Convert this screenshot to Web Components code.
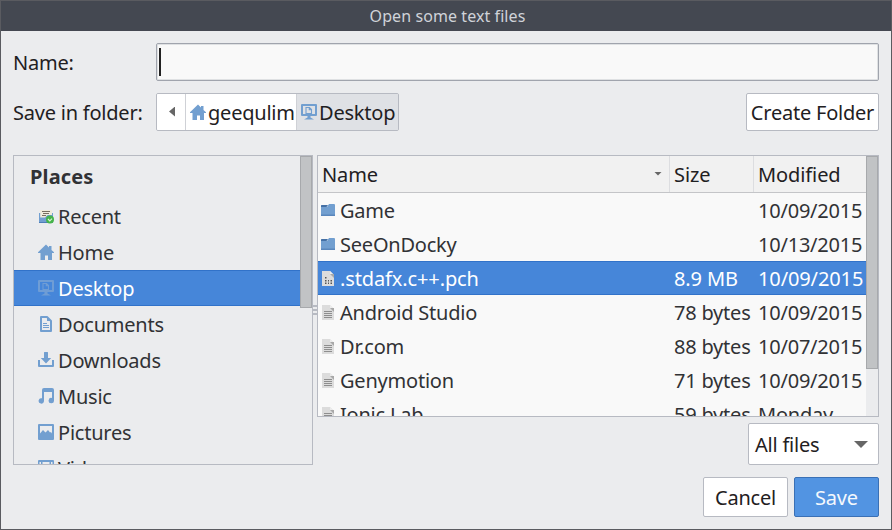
<!DOCTYPE html>
<html lang="en">
<head>
<meta charset="utf-8">
<title>Open some text files</title>
<style>
html,body{margin:0;height:100%;overflow:hidden}
body{font:20px/28px "Noto Sans","Open Sans",sans-serif;color:#1f2022;letter-spacing:-.22px}
</style>
</head>
<body>
<fd-window></fd-window>
<script>
const define = (name, html, setup) => customElements.define(name, class extends HTMLElement {
  connectedCallback() {
    if (this.shadowRoot) return;
    const t = document.createElement('template');
    t.innerHTML = typeof html === 'function' ? html(this) : html;
    this.attachShadow({mode: 'open'}).append(t.content.cloneNode(true));
    if (setup) setup(this);
  }
});

const lines = c => `<path fill="none" stroke="${c}" d="M4 7.5h8M4 9.500h8M4 11.500h8M4 13.500h8"/>`;
const sheet = '<path fill="#dcdcdc" d="M2 1h8l4 4v11H2z"/><path fill="#a9a9a9" d="M10 4h4v4z"/><path fill="#ececec" d="M10 1v3h3z"/>';
const glyphs = {
  home: '<path fill="#729fd0" d="M8 0.400 11 3.400V2h2.500v4L16 8.300V9h-2v7h-4v-4.500H7V16H2.500V9H0V8.300z"/>',
  desktop: '<g fill="none" stroke="currentColor"><path stroke-width="2" d="M1 1h14v10H1z" stroke-linejoin="round"/><path stroke-width="1.100" d="M5 3.500h3.500L10.500 5.500v4H5zM8.300 3.500v2.200h2"/></g><path fill="currentColor" d="M6.500 12h3v1.500l3.500 2H3l3.500-2z"/>',
  recent: '<path fill="#efeada" d="M2 2h12v8H2z"/><path stroke="#776f60" stroke-width="1.100" d="M4 3.500h8M5 5.500h6M4 7.500h4"/><path fill="#729fd0" d="M1 5h1.200v4.500H7L9.500 7H14V5h1v9.500H1z"/><path fill="#4d7db8" d="M1 14h14v1H1z"/><circle cx="12" cy="11.500" r="4" fill="#45b449"/><path fill="none" stroke="#d4f2d5" stroke-width="1.200" d="m10 11 1.800 1.800L14 10.600"/>',
  documents: '<path fill="none" stroke="#729fd0" stroke-width="2" stroke-linejoin="round" d="M3 1h6l4 4v10H3z"/><path fill="#729fd0" d="M9 1v4h4z"/><path stroke="#729fd0" d="M5 7.500h4M5 9.500h6M5 11.500h6"/>',
  downloads: '<path fill="#729fd0" d="M6 .500Q6 0 6.500 0h3q.5 0 .5.500V6h3.200L8 11.600 2.800 6H6zM0 8h2v5h12V8h2v6q0 1-1 1H1q-1 0-1-1z"/>',
  music: '<path fill="#729fd0" d="M4 2q0-2 2-2h8q2 0 2 2v10.500a2.700 2.700 0 1 1-2-2.500V4H6v9.300A2.700 2.700 0 1 1 4 10.300z"/>',
  pictures: '<path fill="#729fd0" fill-rule="evenodd" d="M1 0h14q1 0 1 1v14q0 1-1 1H1q-1 0-1-1V1Q0 0 1 0zM2 2v7.500L5 6l2.500 2.500L10 6l2 2.500L13 8l1 1.500V2z"/>',
  videos: '<path fill="#729fd0" fill-rule="evenodd" d="M1 0h14q1 0 1 1v14q0 1-1 1H1q-1 0-1-1V1Q0 0 1 0zM1.500 2v2H3V2zM13 2v2h1.500V2zM4.500 2v5h7V2z"/>',
  folder: '<path fill="#729fd0" d="M1 5h6l2-3h5q1 0 1 1v10H1z"/><path fill="#4470a5" d="M1 3.500Q1 3 1.500 3H8L6.500 5H1z"/><path fill="#5a87bd" d="M1 12.500h14V14H1z"/>',
  text: sheet + lines('#8e8e8e'),
  binary: sheet + '<path fill="#555" d="M5 7h1.500v1.500H5zM5 10h1.500v1.500H5zM5 12.500h1.500V14H5zM8 10h1v1.500H8zM8 12.500h1V14H8zM10.500 10H12v1.500h-1.500zM10.500 12.500H12V14h-1.500z"/>'
};

define('fd-icon', el => `<style>:host{display:block;flex:none;width:16px;height:16px}svg{display:block}</style>
<svg width="16" height="16" viewBox="0 0 16 16">${glyphs[el.getAttribute('name')]}</svg>`);

define('fd-triangle', `<style>:host{display:block;flex:none;width:14px;height:7px;background:#666;clip-path:polygon(0 0,100% 0,50% 100%)}
:host([small]){width:8px;height:4px}
:host([left]){width:6px;height:10px;clip-path:polygon(0 50%,100% 0,100% 100%)}</style>`);

define('fd-button', `<style>:host{box-sizing:border-box;display:flex;align-items:center;justify-content:center;border:1px solid #b7bac2;border-radius:2px;background:#fff;white-space:nowrap}
:host([primary]){background:#5294e2;border-color:#3a70b5;color:#f4f8fd}</style><slot></slot>`);

define('fd-crumb', el => `<style>:host{box-sizing:border-box;display:flex;align-items:center;background:#fff;border-left:1px solid #cfd1d6;padding:2px 0 0 4px;white-space:nowrap}
:host([active]){background:#dfe1e5}
fd-icon{color:#729fd0;margin:-2px 2px 0 0}</style>
<fd-icon name="${el.getAttribute('icon')}"></fd-icon><slot></slot>`);

define('fd-scrollbar', el => `<style>:host{box-sizing:border-box;display:block;flex:none;width:12px;background:#ebecee}
div{box-sizing:border-box;height:${el.getAttribute('thumb')}px;background:#c1c3c5;border:1px solid #a7a9ac}</style><div></div>`);

define('fd-place', el => `<style>:host{box-sizing:border-box;display:flex;align-items:center;gap:4px;height:36px;padding:2px 0 0 24px;color:#313235;white-space:nowrap}
:host([selected]){background:#4686d9;border:solid #3172c9;border-width:1px 0;color:#fff}
fd-icon{color:#6f9dd5;margin-top:-2px}</style><fd-icon name="${el.getAttribute('icon')}"></fd-icon><slot></slot>`);

define('fd-file', el => `<style>:host{box-sizing:border-box;display:grid;grid-template-columns:20px 332px 84px 112px;align-items:center;height:34px;padding:2px 0 0 2px;color:#313235;white-space:nowrap}
:host([selected]){background:#4686d9;border:solid #3172c9;border-width:1px 0;color:#fff}
fd-icon{margin-top:-2px}span:nth-of-type(2),span:nth-of-type(3){padding-left:2px}</style>
<fd-icon name="${el.getAttribute('icon')}"></fd-icon><span><slot></slot></span><span><slot name="size"></slot></span><span><slot name="date"></slot></span>`);

define('fd-sidebar', `<style>:host{box-sizing:border-box;display:flex;width:300px;height:310px;border:1px solid #b7bac2;overflow:hidden}
.l{flex:1;min-width:0}h2{margin:0;height:42px;font:bold 20px/42px "Noto Sans";letter-spacing:.15px;padding-left:16px;color:#313235}</style>
<div class="l"><h2>Places</h2>
<fd-place icon="recent">Recent</fd-place><fd-place icon="home">Home</fd-place><fd-place icon="desktop" selected>Desktop</fd-place><fd-place icon="documents">Documents</fd-place><fd-place icon="downloads">Downloads</fd-place><fd-place icon="music">Music</fd-place><fd-place icon="pictures">Pictures</fd-place><fd-place icon="videos">Videos</fd-place></div>
<fd-scrollbar thumb="152"></fd-scrollbar>`);

define('fd-list', `<style>:host{box-sizing:border-box;display:flex;width:562px;height:262px;border:1px solid #b7bac2;background:#f9f9f9;overflow:hidden}
.l{flex:1;min-width:0;overflow:hidden}
.h{box-sizing:border-box;display:grid;grid-template-columns:352px 84px 112px;height:37px;background:#f1f1f1;border-bottom:1px solid #c4c5c8;line-height:36px;letter-spacing:-.1px}
.h div{box-sizing:border-box;display:flex;align-items:center;justify-content:space-between;height:36px;padding:1px 7px 0 4px;border-right:1px solid #dcdde0}.h div:last-child{border:0}
fd-triangle{margin-top:-2px}
fd-file[selected]{letter-spacing:-.12px}</style>
<div class="l"><div class="h"><div>Name<fd-triangle small></fd-triangle></div><div>Size</div><div>Modified</div></div>
<fd-file icon="folder">Game<span slot="date">10/09/2015</span></fd-file>
<fd-file icon="folder">SeeOnDocky<span slot="date">10/13/2015</span></fd-file>
<fd-file icon="binary" selected>.stdafx.c++.pch<span slot="size">8.9 MB</span><span slot="date">10/09/2015</span></fd-file>
<fd-file icon="text">Android Studio<span slot="size">78 bytes</span><span slot="date">10/09/2015</span></fd-file>
<fd-file icon="text">Dr.com<span slot="size">88 bytes</span><span slot="date">10/07/2015</span></fd-file>
<fd-file icon="text">Genymotion<span slot="size">71 bytes</span><span slot="date">10/09/2015</span></fd-file>
<fd-file icon="text">Ionic Lab<span slot="size">59 bytes</span><span slot="date">Monday</span></fd-file></div>
<fd-scrollbar thumb="213"></fd-scrollbar>`);

define('fd-window', `<style>
:host{box-sizing:border-box;display:flex;flex-direction:column;width:892px;height:530px;border:1px solid #5a5b60;background:#ebecee;overflow:hidden}
header{height:30px;background:#444851;color:#d0d3d9;font-size:16px;line-height:30px;text-align:center;letter-spacing:.08px;padding-left:3px}
main{padding:12px 12px 0;display:flex;flex-direction:column}
.row{display:flex;height:38px;align-items:center;margin-bottom:12px}
label{width:143px;padding-top:2px;white-space:nowrap;flex:none}
.in{box-sizing:border-box;flex:1;height:38px;border:1px solid #a0a4ad;border-radius:2px;background:#f9f9f9;box-shadow:inset 0 0 0 1px #dfe1e3;padding:4px 2px}
.in i{display:block;width:2px;height:28px;background:#222}
nav{box-sizing:border-box;display:flex;width:243px;height:38px;border:1px solid #b7bac2;border-radius:2px;overflow:hidden}
.back{width:28px;background:#fff;display:flex;align-items:center;justify-content:center}
.back fd-triangle{margin-left:2px;margin-top:-1px}
.mid{display:flex;margin-top:12px;height:262px;align-items:flex-start}
.grip{width:4px;height:10px;margin-top:150px;background:repeating-linear-gradient(#b7bac2 0 2px,#ebecee 2px 4px)}
.right{display:flex;flex-direction:column;gap:6px;align-items:flex-end}
.combo{width:131px;height:42px;justify-content:space-between;padding:1px 10px 0 6px}
.act{display:flex;justify-content:flex-end;gap:6px;margin-top:60px}
.act fd-button{width:85px;height:40px;padding-top:1px}
</style>
<header>Open some text files</header>
<main>
<div class="row"><label>Name:</label><div class="in"><i></i></div></div>
<div class="row"><label>Save in folder:</label>
<nav><div class="back"><fd-triangle left></fd-triangle></div><fd-crumb icon="home" style="width:111px">geequlim</fd-crumb><fd-crumb icon="desktop" active style="flex:1">Desktop</fd-crumb></nav>
<fd-button style="width:133px;height:38px;margin-left:auto;padding-top:1px">Create Folder</fd-button></div>
<div class="mid"><fd-sidebar></fd-sidebar><div class="grip"></div>
<div class="right"><fd-list></fd-list><fd-button class="combo">All files<fd-triangle></fd-triangle></fd-button></div></div>
<div class="act"><fd-button>Cancel</fd-button><fd-button primary>Save</fd-button></div>
</main>`);
</script>
</body>
</html>
